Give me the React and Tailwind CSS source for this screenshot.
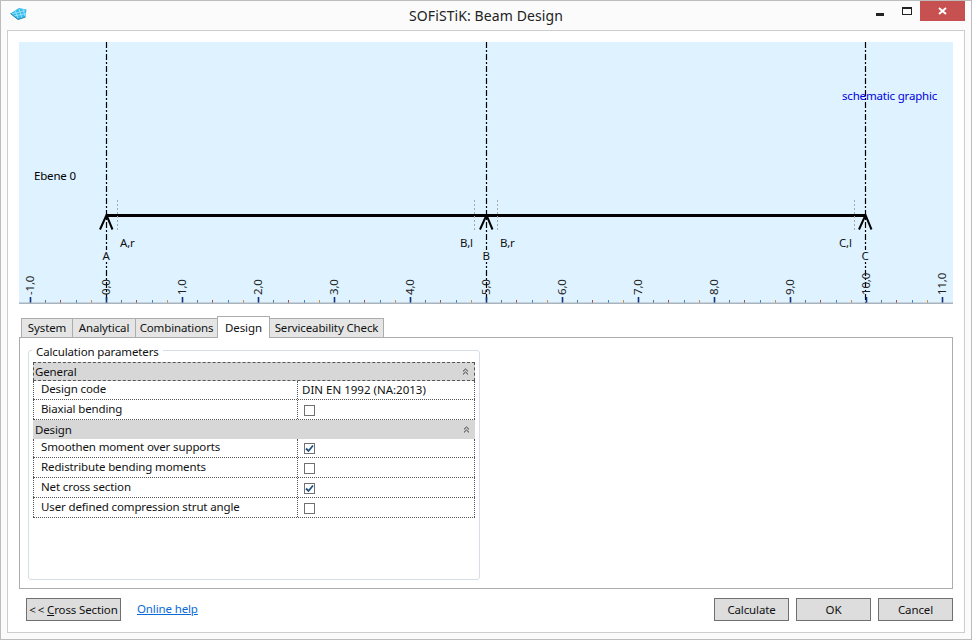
import React from "react";

const SANS = "font-['Noto_Sans','Open_Sans',sans-serif]";
const ticks = [];
for (let i = -5; i <= 55; i++) ticks.push(i);
const tickColors = ["#10307a", "#4d7f80", "#a84a3a", "#3f80c8", "#d08f3a"];
const tc = (i) => tickColors[(i + 5) % 5];
const major = [-1, 0, 1, 2, 3, 4, 5, 6, 7, 8, 9, 10, 11];
const ox = 87; // x of 0.0 inside the canvas
const sp = 76;

function Canvas() {
  return (
    <svg width="934" height="262" className="block shrink-0 bg-[#def2ff]" style={{ fontFamily: "'Noto Sans', sans-serif", letterSpacing: "-0.18px" }}>
      {[87, 467, 846].map((x) => (
        <line key={x} x1={x + 0.5} x2={x + 0.5} y1="0" y2="261" stroke="#000" strokeWidth="1.2" strokeDasharray="6 2 2 2" />
      ))}
      <rect x="87" y="172" width="759" height="3" fill="#000" />
      {[87, 467, 846].map((x) => (
        <path key={x} d={`M${x - 6} 187.5 L${x + 0.5} 173 L${x + 6.5} 187.5`} fill="none" stroke="#000" strokeWidth="2" />
      ))}
      {[98, 455, 478, 835].map((x) => (
        <line key={x} x1={x + 0.5} x2={x + 0.5} y1="158" y2="190" stroke="#a8a8a8" strokeDasharray="2 2" />
      ))}
      {[87, 467, 846].map((x) => (
        <rect key={x} x={x - 4} y="208" width="9" height="12" fill="#def2ff" />
      ))}
      <text x="823" y="57.5" fontSize="11.5" fill="#0000e0">schematic graphic</text>
      <text x="15" y="138" fontSize="11.5" fill="#000">Ebene 0</text>
      {[["A,r", 101, 205], ["B,l", 441, 205], ["B,r", 481, 205], ["C,l", 820, 205], ["A", 83.5, 218], ["B", 463.5, 218], ["C", 842.5, 218]].map(([t, x, y]) => (
        <text key={t} x={x} y={y} fontSize="11.5" fill="#111">{t}</text>
      ))}
      {ticks.map((i) => {
        const x = Math.round(ox + (i * sp) / 5);
        const isMajor = i % 5 === 0;
        return (
          <line key={i} x1={x + 0.5} x2={x + 0.5} y1={isMajor ? 255 : 258} y2="261" stroke={tc(i)} strokeWidth={isMajor ? 1.6 : 1} />
        );
      })}
      <rect x="0" y="260.5" width="934" height="1.5" fill="#a9b4bc" />
      {major.map((m) => {
        const x = ox + m * sp;
        const t = m.toFixed(1).replace(".", ",");
        return (
          <text key={m} transform={`translate(${x + 4} 253) rotate(-90)`} fontSize="11.5" fill="#222">{t}</text>
        );
      })}
    </svg>
  );
}

function Tab({ label, active, w }) {
  return active ? (
    <div className={`${w} h-[22px] -mt-[2px] -mb-px z-10 relative bg-white border border-[#acacac] border-b-0 flex items-center justify-center text-[11.5px]`}>{label}</div>
  ) : (
    <div className={`${w} h-[19px] bg-[#e5e5e5] border border-[#acacac] border-b-0 -ml-px flex items-center justify-center text-[11.5px]`}>{label}</div>
  );
}

function Box({ checked }) {
  return (
    <span className="ml-[2px] mt-[1px] w-[11px] h-[11px] border border-[#707070] bg-white flex items-center justify-center">
      {checked && (
        <svg width="9" height="9" viewBox="0 0 9 9">
          <path d="M1 4.5 L3.5 7 L8 1.5" fill="none" stroke="#1f4f82" strokeWidth="1.8" />
        </svg>
      )}
    </span>
  );
}

function Group({ label, focused }) {
  return (
    <div className={`h-[19px] bg-[#d7d7d7] flex items-center justify-between pr-[5px] text-[11.5px] ${focused ? "pl-px border border-dashed border-[#555]" : "pl-[2px]"}`}>
      <span>{label}</span>
      <svg width="7" height="7" viewBox="0 0 7 7">
        <path d="M1 3.4 L3.5 1 L6 3.4 M1 6.4 L3.5 4 L6 6.4" fill="none" stroke="#333" strokeWidth="1" />
      </svg>
    </div>
  );
}

function Row({ label, children, h = "h-[20px]" }) {
  return (
    <div className={`${h} flex border-b border-dotted border-[#555] text-[11.5px]`}>
      <div className="w-[265px] pl-[7px] border-l border-r border-dotted border-[#555] flex items-center pb-[2px]">{label}</div>
      <div className="flex-1 pl-[4px] border-r border-dotted border-[#555] flex items-center">{children}</div>
    </div>
  );
}

function Btn({ children, className = "", w }) {
  return (
    <div className={`${w} h-[23px] bg-[#dddddd] border border-[#707070] flex items-center justify-center text-[11.5px] ${className}`}>{children}</div>
  );
}

export default function App() {
  return (
    <div className={`w-[972px] h-[640px] flex flex-col bg-[#fbfbfb] border border-[#bdbdbd] text-[#111] tracking-[-0.13px] ${SANS}`}>
      <div className="h-[29px] shrink-0 flex items-center relative">
        <svg width="18" height="14" viewBox="0 0 18 14" className="ml-[9px] -mt-[3px]">
          <path d="M0.5 6.5 L9 1 L16.5 2.5 L15.5 10 L8 12.5 Z" fill="#35bdf0" />
          <path d="M5 3.5 L8 11 M9 2 L12 11 M13 2 L15 9 M2 7 L15 3.5 M4 9 L16 6.5" stroke="#a8e6fb" strokeWidth="0.8" fill="none" />
          <path d="M0.5 6.5 L8 12.5 L15.5 10" stroke="#2080b0" strokeWidth="1" fill="none" />
        </svg>
        <div className="flex-1 text-center text-[14px] tracking-[0.1px] text-[#222] -mt-[1px] pl-[24px]">SOFiSTiK: Beam Design</div>
        <div className="h-[2.5px] bg-[#222] absolute left-[875px] top-[12px] w-[8px]" />
        <div className="absolute left-[901px] top-[6px] w-[10px] h-[8px] border border-[#222] border-t-2" />
        <div className="w-[45px] h-[20px] bg-[#c75050] -mt-[9px] mr-[6px] flex items-center justify-center">
          <svg width="9" height="8" viewBox="0 0 9 8"><path d="M1 1 L8 7 M8 1 L1 7" stroke="#fff" strokeWidth="2" /></svg>
        </div>
      </div>
      <div className="flex-1 mx-[6px] mb-[6px] bg-white border border-[#cdcdcd] flex flex-col pt-[11px] px-[11px]">
        <Canvas />
        <div className="flex items-end mt-[14px] pl-[1px] h-[19px] relative">
          <Tab label="System" w="w-[52px] ml-px" />
          <Tab label="Analytical" w="w-[64px]" />
          <Tab label="Combinations" w="w-[83px]" />
          <Tab label="Design" w="w-[53px] -ml-px" active />
          <Tab label="Serviceability Check" w="w-[115px]" />
        </div>
        <div className="h-[252px] border border-[#acacac] relative pt-[12px] pl-[8px]">
          <div className="w-[452px] h-[230px] border border-[#d5dfe5] rounded-[3px] pt-[11px] px-[4px]">
            <span className="absolute left-[12px] top-[4.5px] bg-white px-[4px] text-[11.5px]">Calculation parameters</span>
            <div className="w-[442px]">
              <Group label="General" focused />
              <Row label="Design code" h="h-[19px]"><span className="text-[11.5px] tracking-normal">DIN EN 1992 (NA:2013)</span></Row>
              <Row label="Biaxial bending"><Box /></Row>
              <Group label="Design" />
              <Row label="Smoothen moment over supports" h="h-[19px]"><Box checked /></Row>
              <Row label="Redistribute bending moments"><Box /></Row>
              <Row label="Net cross section"><Box checked /></Row>
              <Row label="User defined compression strut angle"><Box /></Row>
            </div>
          </div>
        </div>
        <div className="flex items-center mt-[9px] pl-[7px]">
          <Btn w="w-[95px]"><span className="mr-[2px]">&lt;</span>&lt;&nbsp;<span className="underline">C</span>ross Section</Btn>
          <span className="ml-[16px] -mt-[2px] text-[11.5px] text-[#0a6ad8] underline">Online help</span>
          <div className="ml-auto flex gap-[7px]">
            <Btn w="w-[75px]">Calculate</Btn>
            <Btn w="w-[75px]">OK</Btn>
            <Btn w="w-[75px]">Cancel</Btn>
          </div>
        </div>
      </div>
    </div>
  );
}
